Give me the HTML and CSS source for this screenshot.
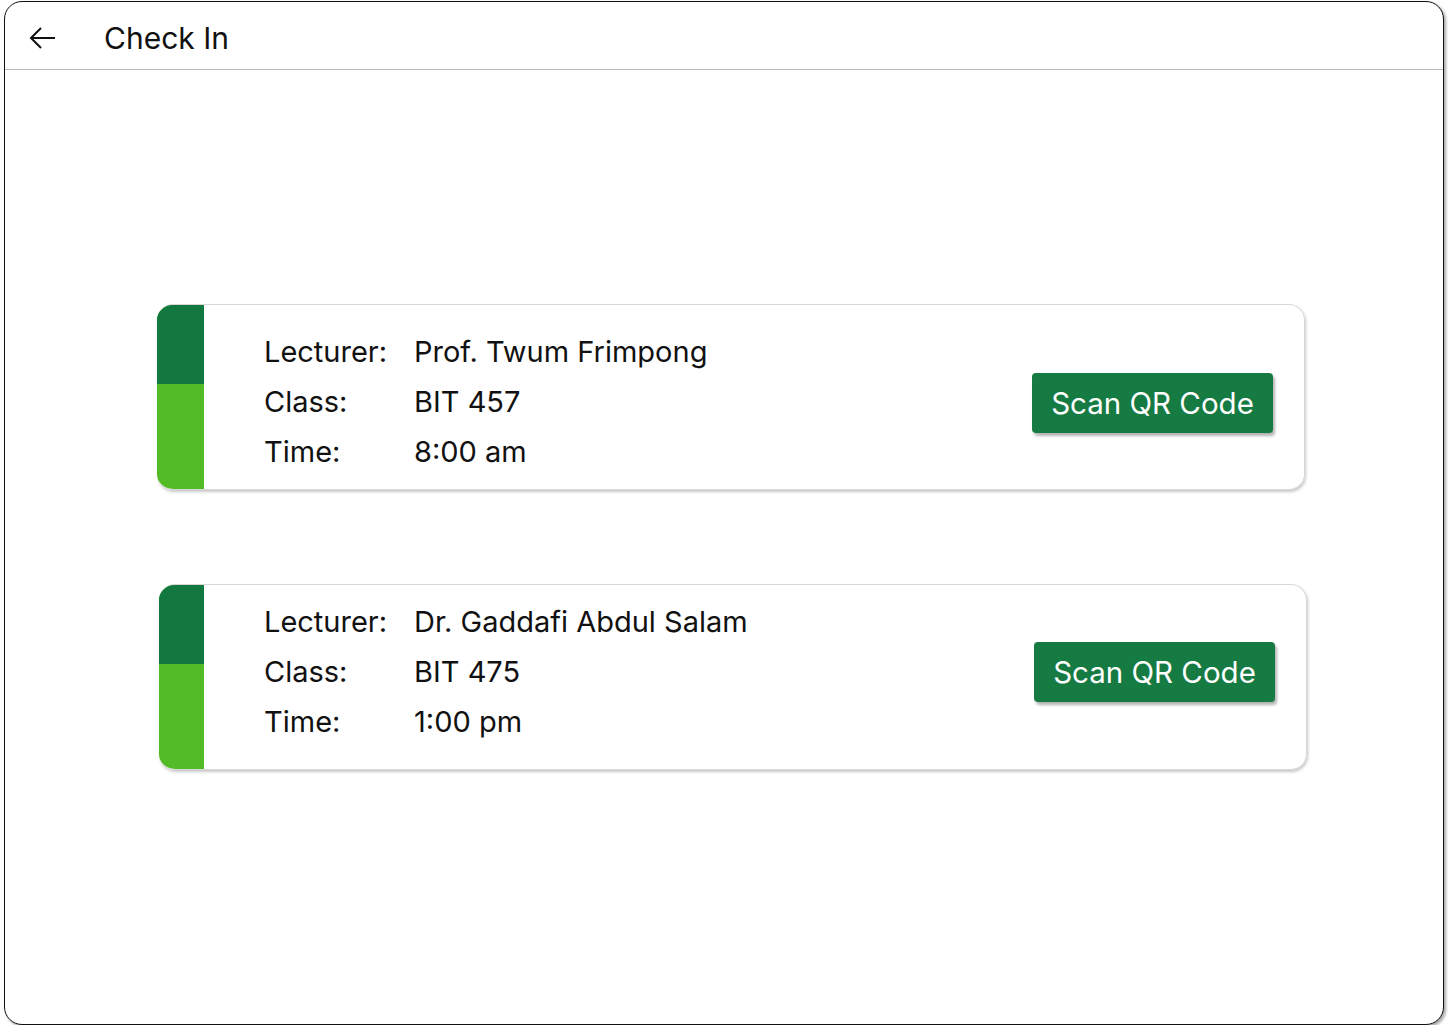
FILE: index.html
```html
<!DOCTYPE html>
<html>
<head>
<meta charset="utf-8">
<link rel="stylesheet" href="styles.css">
</head>
<body>
<div class="frame">
  <header class="topbar">
    <svg class="back" width="28" height="22" viewBox="0 0 28 22"><path d="M26 11H2M12 1L2 11l10 10" fill="none" stroke="#111" stroke-width="2"/></svg>
    <h1 class="title">Check In</h1>
  </header>
  <main class="content">
    <section class="card card-a">
      <div class="stripe"><div class="stripe-top"></div></div>
      <div class="info">
        <span class="label">Lecturer:</span><span class="value">Prof. Twum Frimpong</span>
        <span class="label">Class:</span><span class="value">BIT 457</span>
        <span class="label">Time:</span><span class="value">8:00 am</span>
      </div>
      <button class="scan">Scan QR Code</button>
    </section>
    <section class="card card-b">
      <div class="stripe"><div class="stripe-top"></div></div>
      <div class="info">
        <span class="label">Lecturer:</span><span class="value">Dr. Gaddafi Abdul Salam</span>
        <span class="label">Class:</span><span class="value">BIT 475</span>
        <span class="label">Time:</span><span class="value">1:00 pm</span>
      </div>
      <button class="scan">Scan QR Code</button>
    </section>
  </main>
</div>
</body>
</html>
```
FILE: styles.css
```css
* { box-sizing: border-box; }
html, body { margin: 0; padding: 0; background: #fff; }
body { font-family: Inter, "Noto Sans", sans-serif; color: #111; }
.frame {
  margin: 1px 0 0 4px;
  width: 1440px;
  height: 1024px;
  border: 1px solid #111;
  border-radius: 18px;
  box-shadow: 2px 2px 3px rgba(0,0,0,0.35);
  overflow: hidden;
  background: #fff;
}
.topbar {
  height: 68px;
  border-bottom: 1px solid #bcbcbc;
  display: flex;
  align-items: center;
  padding: 5px 0 0 24px;
}
.back { display: block; }
.title {
  margin: 0 0 0 47px;
  font-size: 30px;
  font-weight: 400;
}
.content {
  padding: 234px 0 0 152px;
  display: flex;
  flex-direction: column;
  gap: 94px;
}
.card {
  width: 1148px;
  height: 186px;
  border: 1px solid #d8d8d8;
  border-left: none;
  border-radius: 16px;
  box-shadow: 1px 2px 3px rgba(0,0,0,0.22);
  overflow: hidden;
  display: flex;
  align-items: flex-start;
}
.card-b { margin-left: 2px; }
.stripe {
  width: 47px;
  align-self: stretch;
  background: #52bb25;
  margin-top: -1px;
  margin-bottom: -1px;
}
.card-b .stripe { width: 45px; }
.stripe-top { height: 80px; background: #13783f; }
.info {
  margin-left: 60px;
  display: grid;
  grid-template-columns: 150px auto;
  grid-auto-rows: 50px;
  align-items: center;
  font-size: 29px;
  flex: 1;
}
.card-a .info { margin-top: 21px; }
.card-b .info { margin-top: 11px; }
.scan {
  width: 241px;
  height: 60px;
  margin-right: 31px;
  border: none;
  border-radius: 4px;
  background: #167a43;
  color: #fff;
  font-family: Inter, "Noto Sans", sans-serif;
  font-size: 29.5px;
  box-shadow: 2px 3px 3px rgba(0,0,0,0.3);
  padding: 0;
}
.card-a .scan { margin-top: 68px; }
.card-b .scan { margin-top: 57px; }
```
